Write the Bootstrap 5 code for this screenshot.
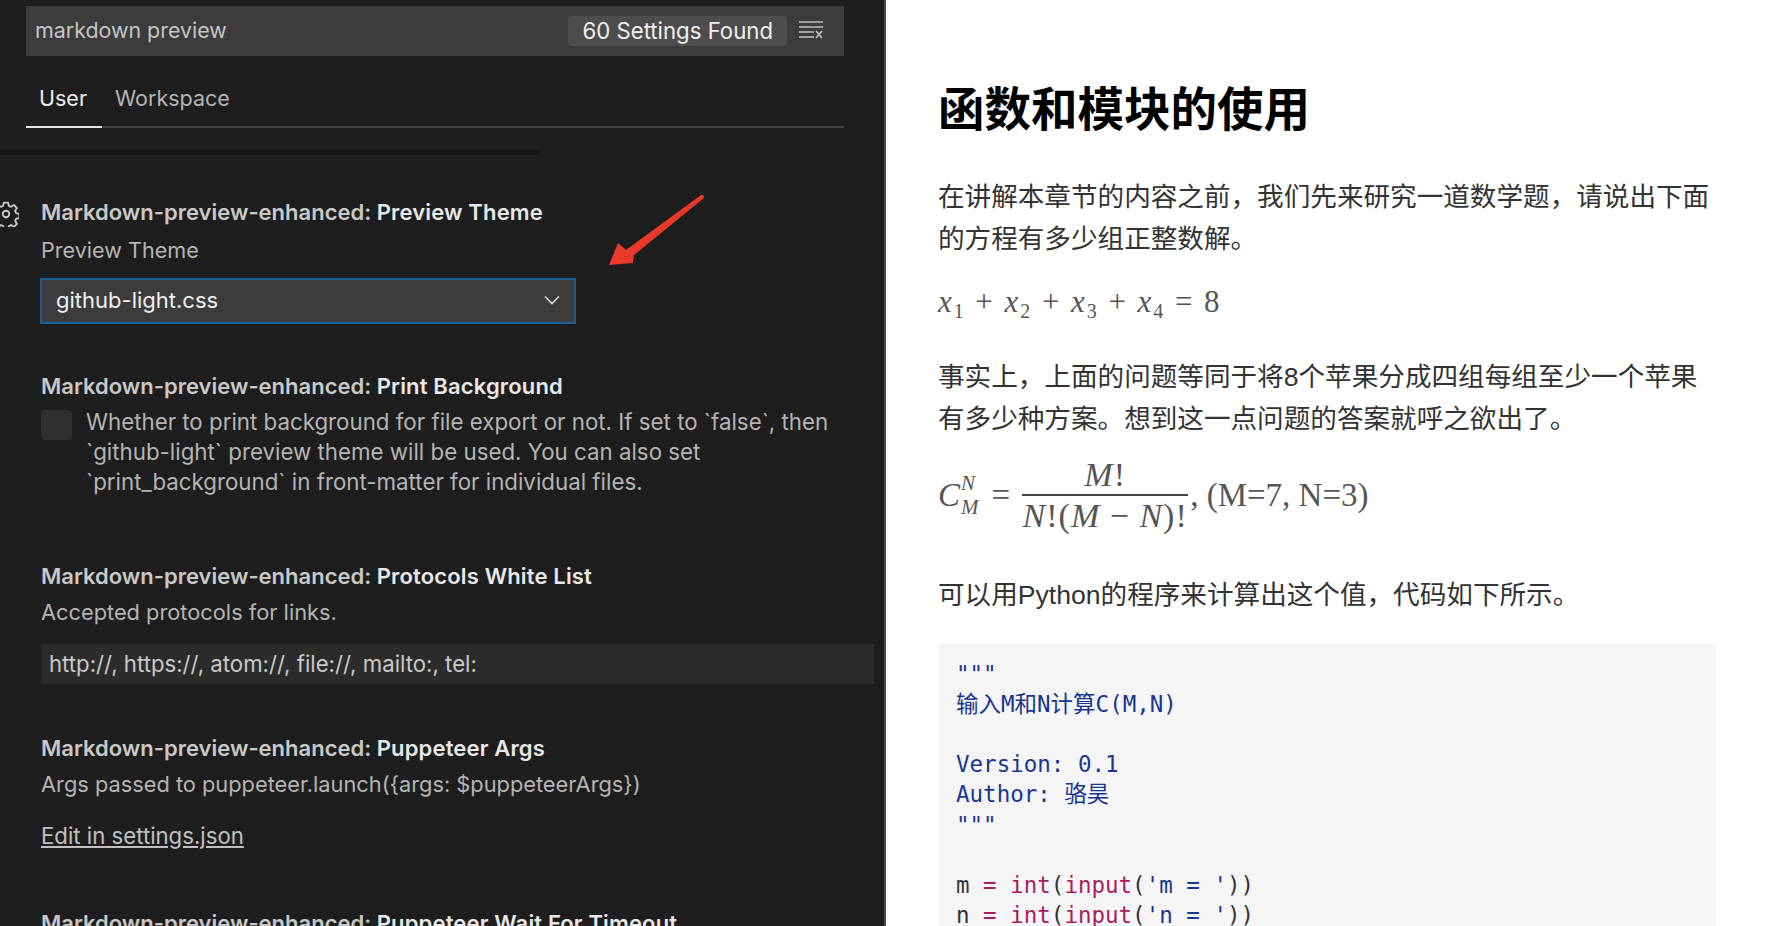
<!DOCTYPE html>
<html lang="zh">
<head>
<meta charset="utf-8">
<title>Markdown preview settings</title>
<link href="https://cdn.jsdelivr.net/npm/bootstrap@5.3.0/dist/css/bootstrap.min.css" rel="stylesheet">
<style>
html,body{height:926px;overflow:hidden;background:#fff}
.split{height:926px;overflow:hidden}
.settings-pane{width:884px;flex:none;background:#1e1e1e;color:#b4b4b4;font-family:Inter,"Liberation Sans",sans-serif;font-size:22px;line-height:30px;position:relative;overflow:hidden}
.divider{width:2px;flex:none;background:#4b4b4b}
.search-box{margin:6px 40px 0 26px;height:50px;background:#3c3c3c;padding:0 21px 2px 9px;color:#c4c4c4;font-size:21.4px}
.count-pill{background:#4d4d4d;color:#f0f0f0;border-radius:4px;height:30px;padding:0 14px;margin-right:12px;line-height:29px;font-size:22.2px;position:relative;top:1px}
.tab-strip{margin:26px 40px 0 26px;height:46px;border-bottom:2px solid #444}
.tab-item{height:46px;padding:0 13px;line-height:32px;color:#b4b4b4;font-size:21.5px}
.tab-item.on{color:#eee;border-bottom:2px solid #e6e6e6;width:76px}
.scroll-shade{width:540px;height:5px;margin-top:22px;background:#161616}
.setting{padding-left:41px;position:relative}
.setting-title{font-weight:600;color:#c8c8c8;height:30px;white-space:nowrap}
.setting-title b{font-weight:600;color:#e8e8e8;letter-spacing:.15px}
.setting-desc{height:30px;margin-top:8px;white-space:nowrap;font-size:21.8px}
.s1{margin-top:42px}.s2{margin-top:47px}.s3{margin-top:64px}.s4{margin-top:49px}.s5{margin-top:57px}
.s1 .setting-desc{font-size:21.6px}
.s3 .setting-desc,.s4 .setting-desc{margin-top:6px}
.gear-mark{position:absolute;left:-7px;top:4px;width:26px;height:26px}
.pick-box{width:536px;height:46px;margin:13px 0 0 -1px;background-color:#3c3c3c;border:2px solid #1a5f8f;border-radius:0;color:#f0f0f0;padding:0 14px 2px;background-image:none;font-size:22px;line-height:42px}
.tick-box{width:31px;height:30px;flex:none;margin:3px 14px 0 0;background:#303030;border:1px solid #303030;border-radius:4px}
.tick-row{margin-top:6px}
.wrap-desc{white-space:nowrap;font-size:22.3px}
.text-field{width:833px;height:40px;margin-top:17px;background:#2c2c2c;border:0;border-radius:0;color:#c8c8c8;padding:0 8px;font-size:22.2px;line-height:40px}
.json-link{color:#c0c0c0;text-decoration:underline;display:inline-block;margin-top:22px;font-size:22.2px}
.red-arrow{position:absolute;left:600px;top:185px;width:110px;height:90px}
.doc-pane{flex:1;padding:80px 52px 0 52px;color:#333;font-family:"Liberation Sans","Noto Sans CJK SC",sans-serif;font-size:26.6px;line-height:42px;min-width:0;overflow:hidden}
.doc-pane h1{font-size:46.5px;line-height:60px;font-weight:700;color:#000;margin:0 0 36px;font-family:"Liberation Sans","Noto Sans CJK SC",sans-serif}
.doc-pane p{margin:0;white-space:nowrap}
.math-line{font-family:"Liberation Serif",serif;color:#555;white-space:nowrap}
.math-line i{font-style:italic}
.math-line sub{font-size:20px;bottom:-.3em;position:relative;vertical-align:baseline;line-height:0}
.m1{height:40px;line-height:40px;margin:22px 0 34px;letter-spacing:1.95px;font-size:31px}
.m2{height:80px;margin:15px 0 39px;align-items:center;font-size:33px}
.frac{display:inline-flex;flex-direction:column;align-items:center;line-height:40px;margin:0 2px 0 12px;font-size:34px;letter-spacing:1px}
.frac-top{border-bottom:2px solid #444;width:166px;text-align:center;height:41px}
.scripts{display:inline-flex;flex-direction:column;font-size:21px;line-height:24px;margin:0 13px 0 1px}
.code-block{margin:27px 0 0;height:300px;background:#f5f5f5;border-radius:6px;padding:15.5px 18px;font-family:"DejaVu Sans Mono","Noto Sans CJK SC",monospace;font-size:22.5px;line-height:30.2px;color:#333;overflow:hidden;white-space:pre}
.code-block .st{color:#183691}
.code-block .kw{color:#a71d5d}
</style>
</head>
<body>
<div class="split d-flex">
  <div class="settings-pane">
    <div class="search-box d-flex align-items-center">
      <span class="flex-grow-1">markdown preview</span>
      <span class="count-pill">60 Settings Found</span>
      <svg width="24" height="18" viewBox="0 0 24 18" fill="none" stroke="#c0c0c0" stroke-width="1.6"><path d="M0 1h24M0 6h24M0 11h15M0 16h15M17 10l6 7M23 10l-6 7"/></svg>
    </div>
    <div class="tab-strip d-flex">
      <span class="tab-item on">User</span>
      <span class="tab-item">Workspace</span>
    </div>
    <div class="scroll-shade"></div>

    <div class="setting s1">
      <svg class="gear-mark" viewBox="0 0 24 24" fill="none" stroke="#c8c8c8" stroke-width="1.7" stroke-linejoin="round"><circle cx="12" cy="12" r="3"/><path d="M10 1.5h4l.6 3 2.1.9 2.6-1.7 2.8 2.8-1.7 2.6.9 2.1 3 .6v4l-3 .6-.9 2.1 1.7 2.6-2.8 2.8-2.6-1.7-2.1.9-.6 3h-4l-.6-3-2.1-.9-2.6 1.7-2.8-2.8 1.7-2.6-.9-2.1-3-.6v-4l3-.6.9-2.1-1.7-2.6 2.8-2.8 2.6 1.7 2.1-.9z"/></svg>
      <div class="setting-title">Markdown-preview-enhanced: <b>Preview Theme</b></div>
      <div class="setting-desc">Preview Theme</div>
      <div class="form-select pick-box d-flex justify-content-between align-items-center">
        <span>github-light.css</span>
        <svg width="16" height="10" viewBox="0 0 16 10" fill="none" stroke="#d8d8d8" stroke-width="1.6"><path d="M1 1.5l7 7 7-7"/></svg>
      </div>
    </div>

    <div class="setting s2">
      <div class="setting-title">Markdown-preview-enhanced: <b>Print Background</b></div>
      <div class="tick-row d-flex">
        <div class="tick-box"></div>
        <div class="wrap-desc">Whether to print background for file export or not. If set to `false`, then<br>`github-light` preview theme will be used. You can also set<br>`print_background` in front-matter for individual files.</div>
      </div>
    </div>

    <div class="setting s3">
      <div class="setting-title">Markdown-preview-enhanced: <b>Protocols White List</b></div>
      <div class="setting-desc">Accepted protocols for links.</div>
      <div class="form-control text-field">http://, https://, atom://, file://, mailto:, tel:</div>
    </div>

    <div class="setting s4">
      <div class="setting-title">Markdown-preview-enhanced: <b>Puppeteer Args</b></div>
      <div class="setting-desc">Args passed to puppeteer.launch({args: $puppeteerArgs})</div>
      <a class="json-link" href="#">Edit in settings.json</a>
    </div>

    <div class="setting s5">
      <div class="setting-title">Markdown-preview-enhanced: <b>Puppeteer Wait For Timeout</b></div>
    </div>

    <svg class="red-arrow" viewBox="600 185 110 90"><path d="M609 265L618 243 626 250 701 195Q704 194 704 198L634 255 633 263Z" fill="#e8392a"/></svg>
  </div>
  <div class="divider"></div>
  <div class="doc-pane">
    <h1>函数和模块的使用</h1>
    <p>在讲解本章节的内容之前，我们先来研究一道数学题，请说出下面<br>的方程有多少组正整数解。</p>
    <div class="math-line m1"><i>x</i><sub>1</sub> + <i>x</i><sub>2</sub> + <i>x</i><sub>3</sub> + <i>x</i><sub>4</sub> = 8</div>
    <p>事实上，上面的问题等同于将8个苹果分成四组每组至少一个苹果<br>有多少种方案。想到这一点问题的答案就呼之欲出了。</p>
    <div class="math-line m2 d-flex"><i>C</i><span class="scripts"><i>N</i><i>M</i></span>=<span class="frac"><span class="frac-top"><i>M</i>!</span><span><i>N</i>!(<i>M</i> − <i>N</i>)!</span></span>, (M=7, N=3)</div>
    <p>可以用Python的程序来计算出这个值，代码如下所示。</p>
    <div class="code-block"><span class="st">"""
输入M和N计算C(M,N)

Version: 0.1
Author: 骆昊
"""</span>

m <span class="kw">=</span> <span class="kw">int</span>(<span class="kw">input</span>(<span class="st">'m = '</span>))
n <span class="kw">=</span> <span class="kw">int</span>(<span class="kw">input</span>(<span class="st">'n = '</span>))</div>
  </div>
</div>
<script src="https://cdn.jsdelivr.net/npm/bootstrap@5.3.0/dist/js/bootstrap.bundle.min.js"></script>
</body>
</html>
